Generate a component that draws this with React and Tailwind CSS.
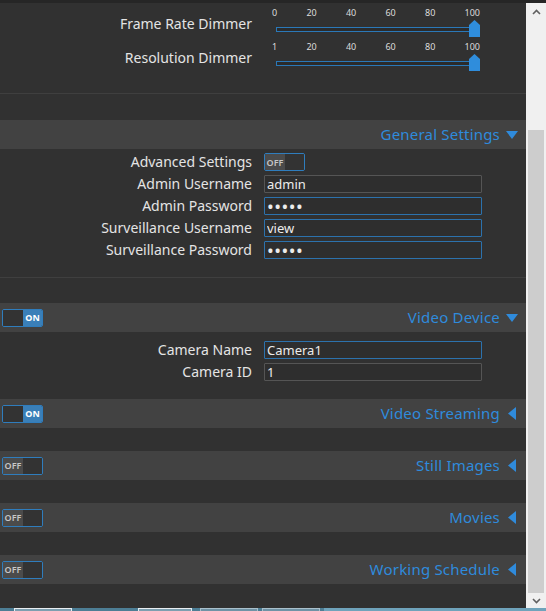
import { useState } from "react";

const font = { fontFamily: '"Noto Sans", "Open Sans", Arial, sans-serif' };

const SLIDERS = [
	{ label: "Frame Rate Dimmer", ticks: ["0", "20", "40", "60", "80", "100"] },
	{ label: "Resolution Dimmer", ticks: ["1", "20", "40", "60", "80", "100"] },
];

const Toggle = ({ on }) => (
	<div className="flex h-[18px] w-[41px] overflow-hidden rounded-[2px] border border-[#2f7dbd] bg-[#323232]">
		{on ? (
			<>
				<div className="w-[20px] bg-[#333333]" />
				<div className="flex flex-1 items-center justify-center bg-[#3a7fb8] text-[9px] font-bold leading-none text-white">
					ON
				</div>
			</>
		) : (
			<>
				<div className="flex w-[20px] items-center justify-center bg-[#4b4b4b] text-[9px] font-semibold leading-none text-[#c8c8c8]">
					OFF
				</div>
				<div className="flex-1 bg-[#333333]" />
			</>
		)}
	</div>
);

const Arrow = ({ open }) =>
	open ? (
		<svg width="12" height="8" viewBox="0 0 12 8" className="ml-[6px]">
			<polygon points="0,0 12,0 6,8" fill="#2f8bdc" />
		</svg>
	) : (
		<svg width="8" height="13" viewBox="0 0 8 13" className="ml-[8px] mr-[2px]">
			<polygon points="8,0 8,13 0,6.5" fill="#2f8bdc" />
		</svg>
	);

const SectionHeader = ({ title, open, toggle }) => (
	<div className="flex h-[29px] items-center bg-[#424242] pl-[2px] pr-[8px]">
		{toggle !== undefined && <Toggle on={toggle} />}
		<div className="ml-auto flex items-center">
			<span className="text-[15px] tracking-[0.2px] text-[#2f8bdc]">{title}</span>
			<Arrow open={open} />
		</div>
	</div>
);

const Slider = ({ label, ticks }) => (
	<div className="flex h-[34px]">
		<div className="mt-[7px] w-[252px] text-right text-[14px] leading-[20px] text-[#e4e4e4]">
			{label}
		</div>
		<div className="ml-[20px] w-[208px]">
			<div className="flex h-[12px] justify-between text-[9px] leading-[12px] text-[#dcdcdc]">
				{ticks.map((t) => (
					<span key={t}>{t}</span>
				))}
			</div>
			<div className="relative ml-[4px] mt-[8px] h-[5px] border border-[#2a78b8] bg-[#2b2b2b]">
				<svg
					width="11"
					height="17"
					viewBox="0 0 11 17"
					className="absolute right-[-1px] top-[-8px]"
				>
					<polygon points="0,5 5.5,0 11,5 11,17 0,17" fill="#2f8ddc" />
				</svg>
			</div>
		</div>
	</div>
);

const Field = ({ label, value, type = "text", focus }) => {
	const [val, setVal] = useState(value);
	const secret = type === "password";
	return (
		<div className="flex h-[18px] items-center">
			<label className="w-[252px] text-right text-[14px] leading-none text-[#e4e4e4]">
				{label}
			</label>
			<input
				type={type}
				value={val}
				onChange={(e) => setVal(e.target.value)}
				className={`ml-[12px] h-[18px] w-[218px] rounded-[1px] border bg-[#2e2e2e] px-[2px] leading-none text-[#ececec] outline-none ${
					secret ? "text-[18px] tracking-[0.5px]" : "text-[13px]"
				} ${focus ? "border-[#2c72ad]" : "border-[#555555]"}`}
				style={font}
			/>
		</div>
	);
};

const Scrollbar = () => (
	<div className="flex w-[20px] flex-col bg-[#f0f0f0]">
		<div className="flex h-[17px] items-center justify-center">
			<svg width="9" height="6" viewBox="0 0 9 6">
				<polyline points="1,5 4.5,1.5 8,5" fill="none" stroke="#606060" strokeWidth="1.6" />
			</svg>
		</div>
		<div className="h-[110px]" />
		<div className="mx-[2px] flex-1 bg-[#cdcdcd]" />
		<div className="flex h-[15px] items-center justify-center">
			<svg width="9" height="6" viewBox="0 0 9 6">
				<polyline points="1,1 4.5,4.5 8,1" fill="none" stroke="#606060" strokeWidth="1.6" />
			</svg>
		</div>
	</div>
);

const Taskbar = () => (
	<div className="flex h-[3px] bg-[#4d7e95]">
		<div className="ml-[14px] w-[58px] border-t border-x border-[#e8eef2] bg-[#7d9fb0]" />
		<div className="ml-[66px] w-[54px] border-t border-x border-[#e8eef2] bg-[#7d9fb0]" />
		<div className="ml-[8px] w-[58px] border-t border-x border-[#a9c0cc] bg-[#6f93a6]" />
		<div className="ml-[4px] w-[58px] border-t border-x border-[#a9c0cc] bg-[#6f93a6]" />
		<div className="ml-[4px] flex-1 bg-[#6fa3bb]" />
	</div>
);

export default function App() {
	return (
		<div className="flex h-[611px] w-[546px] flex-col overflow-hidden bg-[#313131]" style={font}>
			<div className="h-[3px] bg-[#262626]" />
			<div className="flex min-h-0 flex-1">
				<main className="flex-1 bg-[#313131]">
					<section className="border-b border-[#3f3f3f] pb-[18px] pt-[4px]">
						{SLIDERS.map((s) => (
							<Slider key={s.label} {...s} />
						))}
					</section>

					<div className="mt-[26px]">
						<SectionHeader title="General Settings" open />
						<div className="flex flex-col gap-[4px] border-b border-[#3f3f3f] pb-[18px] pt-[4px]">
							<div className="flex h-[18px] items-center">
								<span className="w-[252px] text-right text-[14px] leading-none text-[#e4e4e4]">
									Advanced Settings
								</span>
								<div className="ml-[12px]">
									<Toggle on={false} />
								</div>
							</div>
							<Field label="Admin Username" value="admin" />
							<Field label="Admin Password" value="admin" type="password" focus />
							<Field label="Surveillance Username" value="view" focus />
							<Field label="Surveillance Password" value="views" type="password" focus />
						</div>
					</div>

					<div className="mt-[25px]">
						<SectionHeader title="Video Device" open toggle />
						<div className="flex flex-col gap-[4px] pb-[18px] pt-[9px]">
							<Field label="Camera Name" value="Camera1" focus />
							<Field label="Camera ID" value="1" />
						</div>
					</div>

					<SectionHeader title="Video Streaming" toggle />
					<div className="mt-[23px]">
						<SectionHeader title="Still Images" toggle={false} />
					</div>
					<div className="mt-[23px]">
						<SectionHeader title="Movies" toggle={false} />
					</div>
					<div className="mt-[23px]">
						<SectionHeader title="Working Schedule" toggle={false} />
					</div>
				</main>
				<Scrollbar />
			</div>
			<Taskbar />
		</div>
	);
}
